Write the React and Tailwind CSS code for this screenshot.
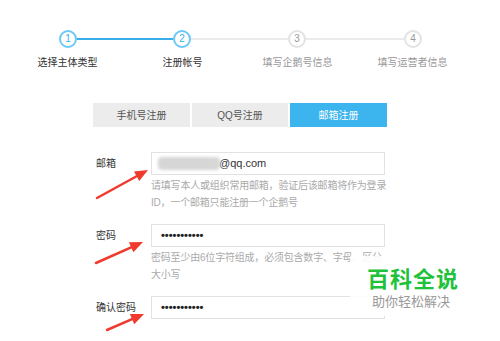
import React from 'react';

const cjk = { fontFamily: '"Liberation Sans", "Noto Sans CJK SC", sans-serif' };

const steps = [
  { n: 1, label: '选择主体类型', done: true },
  { n: 2, label: '注册帐号', done: true },
  { n: 3, label: '填写企鹅号信息', done: false },
  { n: 4, label: '填写运营者信息', done: false },
];

const Circle = ({ n, done }) => (
  <div
    className={`w-[18px] h-[18px] rounded-full border-2 flex items-center justify-center text-[10px] leading-none ${
      done ? 'border-[#6cc8f7] text-[#3aaeea]' : 'border-[#e3e3e3] text-[#999]'
    }`}
  >
    {n}
  </div>
);

const Arrow = ({ x1, y1, x2, y2 }) => {
  const a = Math.atan2(y2 - y1, x2 - x1);
  const L = 13, W = 5.5;
  const bx = x2 - L * Math.cos(a), by = y2 - L * Math.sin(a);
  const px = -Math.sin(a) * W, py = Math.cos(a) * W;
  return (
    <g>
      <line x1={x1} y1={y1} x2={bx} y2={by} stroke="#f03a2e" strokeWidth="2.5" strokeLinecap="round" />
      <polygon points={`${x2},${y2} ${bx + px},${by + py} ${bx - px},${by - py}`} fill="#f03a2e" />
    </g>
  );
};

const Field = ({ label, children, help }) => (
  <div className="flex items-start">
    <div className="w-[56px] pl-[1px] h-[23px] flex items-center text-[10px] text-[#333]">{label}</div>
    <div className="flex flex-col">
      <div className="w-[234px] h-[23px] border border-[#e2e2e2] bg-white flex items-center px-[8px]">{children}</div>
      {help && <div className="w-[240px] mt-[2px] text-[10px] leading-[17px] tracking-[-0.2px] text-[#aaa]">{help}</div>}
    </div>
  </div>
);

const Dots = () => (
  <span className="pl-[1px] text-[11px] text-[#222] font-bold" style={{ fontFamily: '"Liberation Sans", sans-serif' }}>
    •••••••••••
  </span>
);

export default function App() {
  return (
    <div className="relative w-[500px] h-[341px] bg-white overflow-hidden" style={cjk}>
      {/* 步骤条 */}
      <div className="pt-[30px]">
        <div className="flex items-center pl-[59px]">
          <Circle n={1} done />
          <div className="w-[96px] h-[2px] bg-[#3aaeea]" />
          <Circle n={2} done />
          <div className="w-[97px] h-[2px] bg-[#ebebeb]" />
          <Circle n={3} />
          <div className="w-[98px] h-[2px] bg-[#ebebeb]" />
          <Circle n={4} />
        </div>
        <div className="flex pl-[10px] mt-[8px]">
          {steps.map(s => (
            <div key={s.n} className={`w-[115px] text-center text-[10px] leading-[14px] ${s.done ? 'text-[#333]' : 'text-[#999]'}`}>
              {s.label}
            </div>
          ))}
        </div>
      </div>

      {/* 注册方式 */}
      <div className="flex gap-[2px] pl-[93px] mt-[33px]">
        <div className="w-[97px] h-[24px] bg-[#ececec] flex items-center justify-center text-[10px] text-[#555]">手机号注册</div>
        <div className="w-[96px] h-[24px] bg-[#ececec] flex items-center justify-center text-[10px] text-[#555]">QQ号注册</div>
        <div className="w-[97px] h-[24px] bg-[#3cb4ee] flex items-center justify-center text-[10px] text-white">邮箱注册</div>
      </div>

      {/* 表单 */}
      <div className="flex flex-col pl-[95px] mt-[25px]">
        <Field label="邮箱" help="请填写本人或组织常用邮箱，验证后该邮箱将作为登录ID，一个邮箱只能注册一个企鹅号">
          <div className="w-[62px] h-[13px] bg-[#d6d6d6] rounded-sm blur-[1.5px] -ml-[2px]" />
          <span className="text-[11px] text-[#333] -ml-[1px]">@qq.com</span>
        </Field>
        <div className="h-[13px]" />
        <Field label="密码" help="密码至少由6位字符组成，必须包含数字、字母、区分大小写">
          <Dots />
        </Field>
        <div className="h-[13px]" />
        <Field label="确认密码">
          <Dots />
        </Field>
      </div>

      {/* 箭头 */}
      <svg className="absolute inset-0 pointer-events-none" width="500" height="341">
        <Arrow x1={97} y1={198} x2={148} y2={170} />
        <Arrow x1={96} y1={263} x2={143} y2={242} />
        <Arrow x1={107} y1={330} x2={144} y2={314} />
      </svg>

      {/* 水印 */}
      <div className="absolute left-[350px] top-[256px] w-[150px] h-[60px] bg-white/90 flex flex-col items-start pl-[17px] pt-[11px]">
        <div className="text-[22px] leading-[26px] font-bold text-[#1fc23a] tracking-[1px]">百科全说</div>
        <div className="text-[13px] leading-[18px] text-[#999] pl-[5px]">助你轻松解决</div>
      </div>
    </div>
  );
}
